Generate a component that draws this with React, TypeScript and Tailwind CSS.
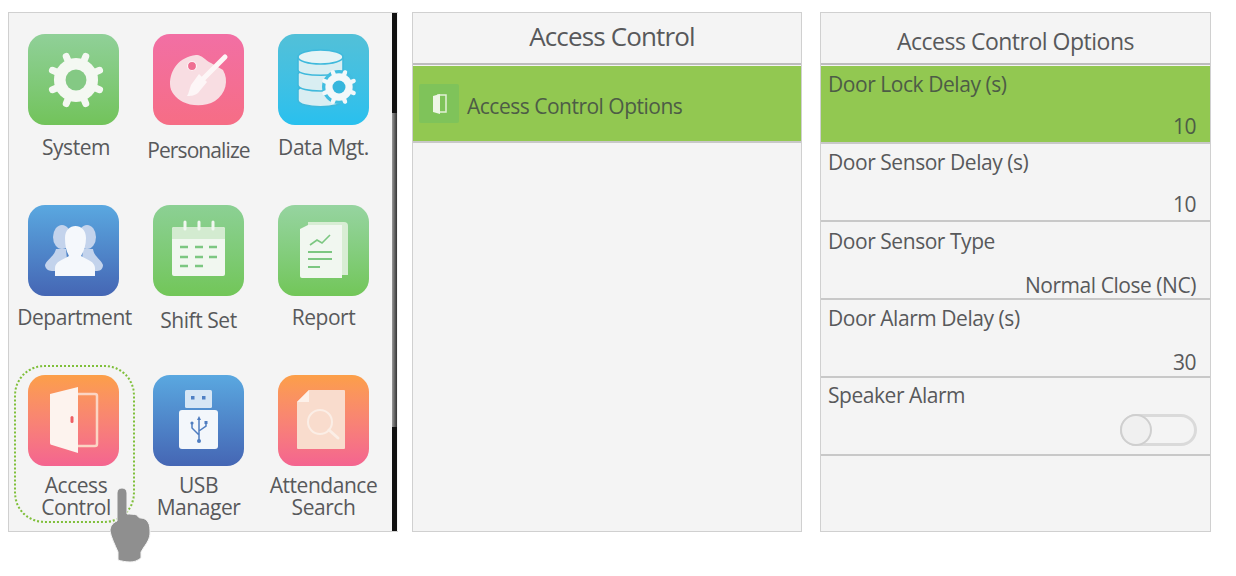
import React from "react";

const gearPath = (cx: number, cy: number, r: number) => {
  const out: string[] = [];
  for (let i = 0; i < 8; i++) {
    const a = (i * Math.PI) / 4 + Math.PI / 8;
    out.push(`M${cx + Math.cos(a) * r * 0.7} ${cy + Math.sin(a) * r * 0.7}L${cx + Math.cos(a) * r} ${cy + Math.sin(a) * r}`);
  }
  return out.join("");
};

const Gear = ({ cx, cy, r, hole, fill = "#f4f8f2" }: { cx: number; cy: number; r: number; hole: string; fill?: string }) => (
  <g>
    <path d={gearPath(cx, cy, r * 0.88)} stroke={fill} strokeWidth={r * 0.24} strokeLinecap="round" />
    <circle cx={cx} cy={cy} r={r * 0.76} fill={fill} />
    <circle cx={cx} cy={cy} r={r * 0.36} fill={hole} />
  </g>
);

const SystemIcon = () => (
  <svg viewBox="0 0 91 91" className="w-full h-full">
    <Gear cx={48} cy={46} r={29} hole="#84c984" />
  </svg>
);

const PersonalizeIcon = () => (
  <svg viewBox="0 0 91 91" className="w-full h-full">
    <path d="M17 50C17 36 26 23 43 21C48 20 52 26 58 29L70 36C76 46 73 60 62 67C52 73 38 72 30 68C23 64 17 58 17 50Z" fill="#f8dde2" />
    <circle cx="39" cy="32" r="4.5" fill="#ef6f92" stroke="#fdf3f5" strokeWidth="1.2" />
    <path d="M72 23L50 45" stroke="#fdf6f7" strokeWidth="5" strokeLinecap="round" />
    <path d="M46 40L54 48L45 59C41 62 37 62 34 62C36 59 36 56 38 51Z" fill="#fdf6f7" />
  </svg>
);

const DataIcon = () => (
  <svg viewBox="0 0 91 91" className="w-full h-full">
    <g fill="#d9eef2" stroke="#3fb9dc" strokeWidth="1.6">
      <path d="M20 56C20 50 65 50 65 56V66C65 75 20 75 20 66Z" />
      <path d="M20 40C20 34 65 34 65 40V51C65 59 20 59 20 51Z" />
      <path d="M20 25C20 18 65 18 65 25V36C65 43 20 43 20 36Z" />
      <ellipse cx="42.5" cy="23" rx="22.5" ry="7" fill="#e6f4f6" />
    </g>
    <circle cx="61" cy="53" r="17" fill="#41bde0" />
    <Gear cx={61} cy={53} r={18} hole="#35b6dd" fill="#f2f8fa" />
  </svg>
);

const DepartmentIcon = () => (
  <svg viewBox="0 0 91 91" className="w-full h-full">
    <g fill="#c3d3ec">
      <ellipse cx="34" cy="32" rx="9" ry="12" />
      <ellipse cx="59" cy="32" rx="9" ry="12" />
      <path d="M28 44L38 44L40 66H24C20 66 17 63 17 60C19 54 26 52 28 44Z" />
      <path d="M65 44L55 44L53 66H69C73 66 75 63 75 60C73 54 66 52 65 44Z" />
    </g>
    <path d="M27 71V63C27 57 34 55 41 51C38 46 37 40 37 33C37 25 42 21 47.500 21C53 21 58 25 58 33C58 40 56 46 53 51C60 55 67 57 67 63V71Z" fill="#f5f8fc" />
  </svg>
);

const ShiftIcon = () => (
  <svg viewBox="0 0 91 91" className="w-full h-full">
    <rect x="19" y="22" width="53" height="49" rx="2" fill="#f1f7f0" />
    <path d="M19 24Q19 22 21 22H70Q72 22 72 24V34H19Z" fill="#d3ebd0" />
    <g stroke="#f1f7f0" strokeWidth="3" strokeLinecap="round">
      <path d="M32 17V24M46 17V24M60 17V24" />
    </g>
    <g stroke="#7cc781" strokeWidth="2.5">
      <path d="M27 42H35M42 42H50M56 42H64M27 52H35M42 52H50M56 52H64M27 61H35M42 61H50" />
    </g>
  </svg>
);

const ReportIcon = () => (
  <svg viewBox="0 0 91 91" className="w-full h-full">
    <path d="M30 17H66Q70 17 70 21V70H30Z" fill="#d8edd4" />
    <path d="M22 24L30 20H64V73H24Q22 73 22 71Z" fill="#f1f7f0" />
    <path d="M32 40L39 35L44 38L52 30" fill="none" stroke="#7cc781" strokeWidth="1.6" />
    <path d="M30 47H54M30 54H54M30 62H42" stroke="#7cc781" strokeWidth="2" />
  </svg>
);

const DoorIcon = () => (
  <svg viewBox="0 0 91 91" className="w-full h-full">
    <rect x="46" y="19" width="23" height="52" rx="2" fill="none" stroke="#fbd5c4" strokeWidth="2.5" />
    <path d="M22 19L50 12V78L24 70Q22 70 22 68Z" fill="#fdf3ee" />
    <rect x="42.5" y="41" width="3" height="7" rx="1.5" fill="#ef5f64" />
  </svg>
);

const UsbIcon = () => (
  <svg viewBox="0 0 91 91" className="w-full h-full">
    <rect x="32" y="15" width="27" height="18" rx="1.5" fill="#d6e6f5" />
    <rect x="38" y="21" width="3.500" height="3.500" fill="#4f80c4" />
    <rect x="49" y="21" width="3.500" height="3.500" fill="#4f80c4" />
    <rect x="26" y="35" width="39" height="39" rx="3" fill="#f3f7fb" />
    <path d="M46 43V66M46 60L39 53V49M46 56L53 51V48" fill="none" stroke="#4f7dc0" strokeWidth="1.5" />
    <circle cx="46" cy="66" r="2" fill="#4f7dc0" />
    <path d="M46 41L44 45H48Z" fill="#4f7dc0" />
    <circle cx="39" cy="48" r="1.600" fill="#4f7dc0" />
    <rect x="51.500" y="46" width="3" height="3" fill="#4f7dc0" />
  </svg>
);

const SearchDocIcon = () => (
  <svg viewBox="0 0 91 91" className="w-full h-full">
    <path d="M31 15H66Q67 15 67 16V73Q67 74 66 74H20Q19 74 19 73V27Z" fill="#f9dccd" />
    <path d="M31 15V27H19Z" fill="#fdf1ea" />
    <circle cx="42" cy="47" r="12" fill="none" stroke="#fbeee6" strokeWidth="2" />
    <path d="M51 55L60 63" stroke="#fbeee6" strokeWidth="3" strokeLinecap="round" />
  </svg>
);

const apps = [
  { lines: ["System"], Icon: SystemIcon, bg: "from-[#90d098] to-[#72c35a]", label: "mt-[11px] pl-[5px] tracking-[-0.45px]" },
  { lines: ["Personalize"], Icon: PersonalizeIcon, bg: "from-[#f26fa4] to-[#f66d85]", label: "mt-[14px] tracking-[-0.9px]" },
  { lines: ["Data Mgt."], Icon: DataIcon, bg: "from-[#52c0d8] to-[#28c0ee]", label: "mt-[11px] tracking-[-0.45px]" },
  { lines: ["Department"], Icon: DepartmentIcon, bg: "from-[#5aa8e0] to-[#4566b4]", label: "mt-[10px] pl-[2px] tracking-[-0.45px]" },
  { lines: ["Shift Set"], Icon: ShiftIcon, bg: "from-[#8cd094] to-[#72c658]", label: "mt-[13px] tracking-[-0.45px]" },
  { lines: ["Report"], Icon: ReportIcon, bg: "from-[#96d4a0] to-[#72c658]", label: "mt-[10px] tracking-[-0.45px]" },
  { lines: ["Access", "Control"], Icon: DoorIcon, bg: "from-[#fc9f48] to-[#f46490]", label: "mt-[8px] pl-[5px] tracking-[-0.45px]" },
  { lines: ["USB", "Manager"], Icon: UsbIcon, bg: "from-[#5aa8e0] to-[#4566b4]", label: "mt-[8px] tracking-[-0.45px]" },
  { lines: ["Attendance", "Search"], Icon: SearchDocIcon, bg: "from-[#fc9f48] to-[#f46490]", label: "mt-[8px] tracking-[-0.45px]" },
];

const options = [
  { label: "Door Lock Delay (s)", value: "10", active: true, pad: "pt-[5px] pb-[3px]" },
  { label: "Door Sensor Delay (s)", value: "10", pad: "pt-[5px] pb-[3px]" },
  { label: "Door Sensor Type", value: "Normal Close (NC)", pad: "pt-[6px] pb-0" },
  { label: "Door Alarm Delay (s)", value: "30", pad: "pt-[5px] pb-px" },
];

const Hand = () => (
  <svg viewBox="0 0 41 76" className="w-[41px] h-[76px]">
    <path
      d="M7 34V6C7 3 9 1 12 1C15 1 17 3 17 6V27C20 27 24 27 27 28C28 30 29 31 31 31C34 31 37 33 38 35C40 38 40 42 40 46C40 51 37 56 34 60L31 65V71C27 74 24 75 20 75C16 75 11 74 8 73V65C5 58 1 50 0 44C0 40 2 36 7 34Z"
      fill="#8f8f8f"
      stroke="#f4f4f4"
      strokeWidth="1"
    />
  </svg>
);

export default function App() {
  return (
    <div className="w-[1236px] h-[576px] bg-white text-[#58595b] font-['Open_Sans',sans-serif] flex items-start pl-2 pt-3 overflow-hidden">
      <div className="relative w-[390px] h-[520px] bg-[#f4f4f4] border border-[#d0d0d0] border-r-0 flex">
        <div className="w-[384px] grid grid-cols-[125px_125px_125px] grid-rows-[171px_170px_157px] pl-[2px] pt-[21px]">
          {apps.map(({ lines, Icon, bg, label }) => (
            <div key={lines[0]} className="flex flex-col items-center">
              <div className={`w-[91px] h-[91px] shrink-0 rounded-[17px] bg-linear-to-b ${bg}`}>
                <Icon />
              </div>
              <div className={`${label} text-[21px] leading-[22px] text-center whitespace-nowrap`}>
                {lines.map((l) => (
                  <div key={l}>{l}</div>
                ))}
              </div>
            </div>
          ))}
        </div>
        <div className="ml-auto w-[6px] flex flex-col items-start">
          <div className="w-[5px] h-[100px] bg-[#111]" />
          <div className="w-[5px] h-[314px] bg-linear-to-r from-[#9a9a9a] to-[#333]" />
          <div className="w-[5px] flex-1 bg-[#111]" />
        </div>
        <div className="absolute left-[5px] top-[352px] w-[121px] h-[158px] rounded-[30px] border-[2.5px] border-dotted border-[#7fbf3a]" />
        <div className="absolute left-[101px] top-[474px]">
          <Hand />
        </div>
      </div>

      <div className="ml-[14px] w-[390px] h-[520px] bg-[#f4f4f4] border border-[#d0d0d0]">
        <div className="h-[52px] pl-[10px] pb-[3px] border-b-2 border-[#bdbdbd] flex items-center justify-center text-[26px] tracking-[-0.85px]">
          Access Control
        </div>
        <div className="mt-[1px] h-[77px] bg-[#92c851] border-b-2 border-[#c8c8c8] flex items-center pl-[6px] gap-[8px] text-[21px] tracking-[-0.5px] text-[#4d5c46]">
          <div className="w-[40px] h-[39px] rounded-[2px] bg-[#7fc35a] flex items-center justify-center">
            <svg viewBox="0 0 18 24" className="w-[18px] h-[24px]">
              <rect x="8" y="3" width="8" height="17" fill="#7fc35a" stroke="#e4f1d8" strokeWidth="1.500" />
              <path d="M3 4L10 2V22L3 20Z" fill="#eef6e6" />
            </svg>
          </div>
          <span className="pt-[7px]">Access Control Options</span>
        </div>
      </div>

      <div className="ml-[18px] w-[391px] h-[520px] bg-[#f4f4f4] border border-[#d0d0d0]">
        <div className="h-[52px] border-b-2 border-[#bdbdbd] flex items-end justify-center pb-[7px] text-[23px] leading-[30px] tracking-[-0.5px]">
          Access Control Options
        </div>
        <div className="mt-[1px]">
          {options.map((o) => (
            <div
              key={o.label}
              className={`h-[78px] pl-[7px] pr-[14px] ${o.pad} border-b-2 border-[#c8c8c8] text-[21px] leading-[26px] tracking-[-0.45px] flex flex-col justify-between ${o.active ? "bg-[#92c851] text-[#4d5c46]" : ""}`}
            >
              <div>{o.label}</div>
              <div className="text-right">{o.value}</div>
            </div>
          ))}
          <div className="h-[78px] pl-[7px] pr-[13px] pt-[4px] border-b-2 border-[#c8c8c8] text-[21px] leading-[26px] tracking-[-0.45px]">
            <div>Speaker Alarm</div>
            <div className="flex justify-end mt-[6px]">
              <div className="w-[77px] h-[32px] rounded-full border-[3px] border-[#dadada] flex">
                <div className="w-[32px] h-[32px] -mt-[3px] -ml-[3px] rounded-full border-2 border-[#cfcfcf] bg-[#f0f0f0]" />
              </div>
            </div>
          </div>
        </div>
      </div>
    </div>
  );
}
